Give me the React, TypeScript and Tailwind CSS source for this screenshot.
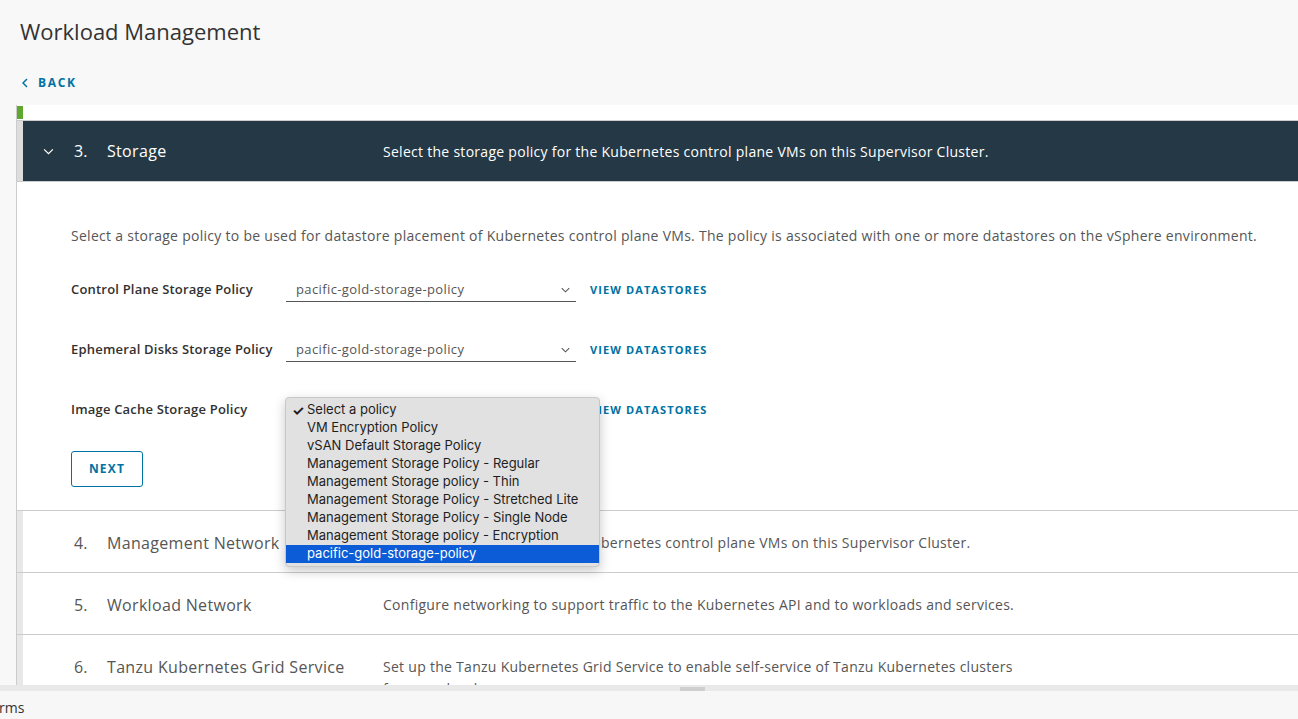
import React from 'react';

const policies = [
  'Select a policy',
  'VM Encryption Policy',
  'vSAN Default Storage Policy',
  'Management Storage Policy - Regular',
  'Management Storage policy - Thin',
  'Management Storage Policy - Stretched Lite',
  'Management Storage Policy - Single Node',
  'Management Storage policy - Encryption',
  'pacific-gold-storage-policy',
];

const ChevronDown = ({ className }: { className?: string }) => (
  <svg viewBox="0 0 12 8" className={className} fill="none" stroke="currentColor" strokeWidth="1.4">
    <path d="M1 1.5 L6 6.5 L11 1.5" />
  </svg>
);

const PolicyRow = ({ label, value }: { label: string; value?: string }) => (
  <div className="flex items-center h-[60px]">
    <div className="w-[215px] text-[13px] font-semibold tracking-[0.015em] text-[#313131]">{label}</div>
    <div className="relative w-[290px] h-[24px] border-b border-[#565656] flex items-center pl-[10px] text-[13px] tracking-[0.03em] text-[#565656]">
      {value}
      <ChevronDown className="absolute right-[6px] top-[9px] w-[9px] h-[6px] text-[#565656]" />
    </div>
    <button className="ml-[14px] text-[11px] font-bold tracking-[0.1em] text-[#0072a3]">VIEW DATASTORES</button>
  </div>
);

const StepRow = ({ num, title, desc, extra }: { num: string; title: string; desc: string; extra?: string }) => (
  <div className="flex h-[62px] border-t border-[#cccccc] shrink-0">
    <div className="w-[6px] bg-[#e8e8e8]" />
    <div className="flex items-start pt-[20px] text-[#565656]">
      <div className="w-[51px]" />
      <div className="w-[33px] text-[16px] leading-[24px]">{num}</div>
      <div className="w-[276px] text-[16px] leading-[24px] tracking-[0.02em]">{title}</div>
      <div className="text-[14px] leading-[22px] pt-[1px] tracking-[0.02em]">
        <div>{desc}</div>
        {extra && <div>{extra}</div>}
      </div>
    </div>
  </div>
);

export default function App() {
  return (
    <div
      className="w-[1298px] h-[719px] overflow-hidden bg-[#f8f8f8] flex flex-col"
      style={{ fontFamily: '"Open Sans", Lato, sans-serif' }}
    >
      <div className="flex-1 overflow-hidden flex flex-col relative">
        <h1 className="pl-[20px] pt-[16px] text-[22px] leading-[30px] font-normal text-[#333333]">
          Workload Management
        </h1>
        <div className="pl-[22px] mt-[28px] h-[20px] flex items-center gap-[10px] text-[#0072a3]">
          <svg viewBox="0 0 6 10" className="w-[6px] h-[10px]" fill="none" stroke="currentColor" strokeWidth="1.5">
            <path d="M5 1 L1 5 L5 9" />
          </svg>
          <span className="text-[12px] font-bold tracking-[0.14em]">BACK</span>
        </div>

        <div className="mt-[13px] ml-[16px] flex-1 bg-white border-l border-[#cccccc] flex flex-col">
          <div className="h-[15px] flex shrink-0">
            <div className="w-[6px] h-[13px] mt-[1px] bg-[#60a72e]" />
          </div>

          <div className="flex h-[62px] border-y border-[#cccccc] shrink-0">
            <div className="w-[6px] bg-[#dddddd]" />
            <div className="flex-1 bg-[#253845] flex items-center text-white">
              <ChevronDown className="ml-[20px] w-[11px] h-[7px] text-white" />
              <div className="ml-[20px] w-[33px] text-[16px]">3.</div>
              <div className="w-[276px] text-[16px] tracking-[0.02em]">Storage</div>
              <div className="text-[14px] tracking-[0.02em]">
                Select the storage policy for the Kubernetes control plane VMs on this Supervisor Cluster.
              </div>
            </div>
          </div>

          <div className="pl-[54px] pt-[44px] pb-[23px] shrink-0">
            <p className="text-[14px] text-[#565656] leading-[20px] tracking-[0.02em] whitespace-nowrap">
              Select a storage policy to be used for datastore placement of Kubernetes control plane VMs. The policy is associated with one or more datastores on the vSphere environment.
            </p>
            <div className="mt-[14px]">
              <PolicyRow label="Control Plane Storage Policy" value="pacific-gold-storage-policy" />
              <PolicyRow label="Ephemeral Disks Storage Policy" value="pacific-gold-storage-policy" />
              <PolicyRow label="Image Cache Storage Policy" />
            </div>
            <button className="mt-[11px] w-[72px] h-[36px] border border-[#0072a3] rounded-[3px] text-[12px] font-bold tracking-[0.1em] text-[#0072a3]">
              NEXT
            </button>
          </div>

          <StepRow
            num="4."
            title="Management Network"
            desc="Configure networking for the Kubernetes control plane VMs on this Supervisor Cluster."
          />
          <StepRow
            num="5."
            title="Workload Network"
            desc="Configure networking to support traffic to the Kubernetes API and to workloads and services."
          />
          <StepRow
            num="6."
            title="Tanzu Kubernetes Grid Service"
            desc="Set up the Tanzu Kubernetes Grid Service to enable self-service of Tanzu Kubernetes clusters"
            extra="for your developers."
          />
        </div>

        {/* open select menu */}
        <div
          className="absolute left-[285px] top-[397px] w-[315px] py-[3px] bg-[#e1e1e1] border border-[#c8c8c8] rounded-[4px] shadow-[0_4px_12px_rgba(0,0,0,0.22)]"
          style={{ fontFamily: 'Inter, "Noto Sans", sans-serif' }}
        >
          {policies.map((p, i) => (
            <div
              key={p}
              className={
                'relative h-[18px] pl-[21px] flex items-center text-[13px] ' +
                (i === policies.length - 1 ? 'bg-[#0b5cd6] text-white' : 'text-[#1e1e1e]')
              }
            >
              {i === 0 && <span className="absolute left-[6px] text-[14px] font-bold">✓</span>}
              {p}
            </div>
          ))}
        </div>
      </div>

      <div className="h-[6px] bg-[#e9e9e9] relative shrink-0">
        <div className="absolute left-[680px] top-[2px] w-[25px] h-[4px] bg-[#cfcfcf]" />
      </div>
      <div className="h-[28px] bg-[#f7f7f7] flex items-end pb-[1px] text-[14px] text-[#333333] shrink-0">
        <span className="-ml-[1px]">rms</span>
      </div>
    </div>
  );
}
